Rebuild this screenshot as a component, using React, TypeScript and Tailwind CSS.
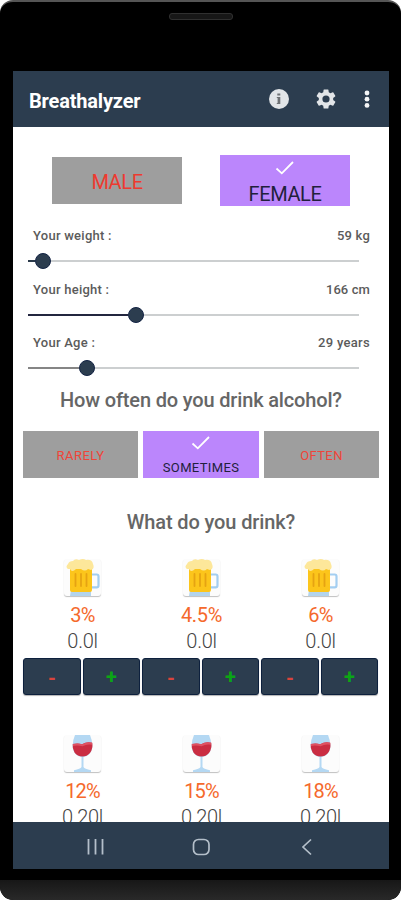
import React from "react";

const measures = [
  { label: "Your weight :", value: "59 kg", at: 15, fill: "bg-[#2b3a4b]", space: "tracking-[0.25px]", valueSpace: "tracking-[0.2px]" },
  { label: "Your height :", value: "166 cm", at: 108, fill: "bg-[#23263f]", space: "tracking-[0.25px]", valueSpace: "tracking-[0.1px]" },
  { label: "Your Age :", value: "29 years", at: 59, fill: "bg-[#858585]", space: "tracking-[0.25px]", valueSpace: "tracking-[0.3px]" },
];

const beers = ["3%", "4.5%", "6%"];
const wines = ["12%", "15%", "18%"];

function Check() {
  return (
    <svg width="20" height="16" viewBox="0 0 20 16" fill="none" stroke="white" strokeWidth="1.8">
      <path d="M1.5 8.5 6.8 13.3 18 2" />
    </svg>
  );
}

function Beer() {
  return (
    <svg width="37" height="37" viewBox="0 0 37 37">
      <path d="M28 15.5h4.7q1.800 0 1.800 1.800v9.200q0 1.800-1.800 1.800H28" fill="none" stroke="#a3cef1" strokeWidth="2.200" />
      <path d="M7 31h20v6H6z" fill="#b3d4ed" />
      <path d="M6 7h22v24q0 2-2 2H8q-2 0-2-2z" fill="#fcc51b" />
      <path d="M11.500 15v12M17 15v12M22.500 15v12" stroke="#e6a312" strokeWidth="1.800" strokeLinecap="round" />
      <path d="M4 10Q1 8 4 5 5 2 9 2q2-3 6-1 4-2 7 0 6-1 7 4 2 5-2 6l-3-1q-3 3-7 0H12Q8 14 6 10z" fill="#fde79a" />
    </svg>
  );
}

function Wine() {
  return (
    <svg width="37" height="37" viewBox="0 0 37 37">
      <path d="M11 0h15q3 7 2.200 13-1.300 7.500-8.700 9v10q1 2 7.500 3.200V37H10v-1.800q6.500-1.200 7.500-3.200v-10Q10 20.500 8.800 13 8 7 11 0z" fill="#b4d8f3" />
      <path d="M8.700 9q5-1.300 9.300 0.200 5-2.800 10.200-1.400 1 6-2.200 10.200-3.200 3.600-7.500 3.600-5 0-8-4-2.300-4-1.800-8.600z" fill="#ca2d42" />
      <path d="M9 9q5-1.300 9.300 0.200 5-2.800 9.900-1.400v2q-5-1-9.700 1.400Q13 10 9 11z" fill="#df5262" />
    </svg>
  );
}

function Drink({ kind, strength, amount }: { kind: "beer" | "wine"; strength: string; amount: string }) {
  return (
    <div className="flex w-[119px] flex-col items-center">
      <div className="h-[37px] w-[37px] rounded-[3px] bg-[#fcfcfc] shadow-[0_1px_1px_rgba(0,0,0,0.25)]">
        {kind === "beer" ? <Beer /> : <Wine />}
      </div>
      <div className={`mt-[6px] h-[26px] text-[20px] leading-[26px] text-[#f5692c] ${strength === "4.5%" ? "tracking-[-0.3px]" : "tracking-[-0.800px]"}`}>{strength}</div>
      <div className="h-[26px] text-[20px] font-light leading-[26px] tracking-[-0.300px] text-[#444]">{amount}</div>
      {kind === "beer" && (
        <div className="mt-[4px] flex w-[119px] gap-[2px]">
          <button className="flex h-[37px] w-[58px] items-center justify-center rounded-[3px] border border-[#0d203d] bg-[#2c3d4f] pt-[3px] text-[20px] font-bold leading-none text-[#d9443c] shadow-[0_1px_1px_rgba(0,0,0,0.3)]">-</button>
          <button className="flex h-[37px] w-[57px] items-center justify-center rounded-[3px] border border-[#0d203d] bg-[#2c3d4f] pt-[2px] text-[20px] font-bold leading-none text-[#0ba515] shadow-[0_1px_1px_rgba(0,0,0,0.3)]">+</button>
        </div>
      )}
    </div>
  );
}

export default function App() {
  return (
    <div className="h-[900px] w-[401px] bg-white font-[Roboto,sans-serif]">
      <div className="flex h-[900px] w-[401px] flex-col overflow-hidden rounded-[13px] border-t-2 border-[#555] bg-black">
        <div className="flex h-[69px] shrink-0 justify-center pt-[11px]">
          <div className="h-[7px] w-[64px] rounded-[3px] border border-[#303030] bg-[#171717]" />
        </div>
        <div className="mx-[13px] flex h-[798px] w-[376px] shrink-0 flex-col bg-white">
          <header className="flex h-[56px] shrink-0 items-center bg-[#2c3d4f] pl-[16px] text-white">
            <h1 className="w-[239px] pt-[3px] text-[20px] font-bold leading-[24px] tracking-[-0.18px]">Breathalyzer</h1>
            <svg width="22" height="22" viewBox="0 0 22 22">
              <circle cx="11" cy="11" r="10" fill="#e2e5e8" />
              <path d="M9.300 5.500h3v2h-3zM8.800 9h3.500v7h1H8.800v-1h.8v-5h-.8z" fill="#6f7275" />
            </svg>
            <svg className="ml-[24px]" width="24" height="24" viewBox="0 0 24 24" fill="#e2e5e8">
              <path d="M19.140 12.940c.04-.3.060-.610.060-.940s-.020-.640-.070-.940l2.030-1.580a.49.49 0 0 0 .120-.610l-1.920-3.320a.49.49 0 0 0-.590-.220l-2.390.960a7 7 0 0 0-1.620-.940l-.360-2.540a.48.48 0 0 0-.480-.410h-3.840a.47.47 0 0 0-.470.410l-.360 2.540c-.590.240-1.130.570-1.620.940l-2.390-.960a.47.47 0 0 0-.590.220L2.740 8.870a.48.48 0 0 0 .120.610l2.030 1.580c-.050.300-.090.630-.090.940s.020.640.070.940l-2.030 1.580a.49.49 0 0 0-.120.610l1.920 3.320c.120.220.370.290.590.220l2.390-.960c.500.380 1.030.700 1.620.940l.360 2.540c.050.240.240.410.480.410h3.840c.240 0 .440-.170.470-.410l.360-2.540c.590-.240 1.130-.560 1.620-.940l2.390.960c.220.080.470 0 .590-.220l1.920-3.320a.47.47 0 0 0-.120-.610zM12 15.600a3.600 3.600 0 1 1 0-7.200 3.600 3.600 0 0 1 0 7.200z" />
            </svg>
            <svg className="ml-[25px]" width="8" height="18" viewBox="0 0 8 18" fill="#f4f5f6">
              <circle cx="4" cy="3" r="2.400" /><circle cx="4" cy="9.200" r="2.400" /><circle cx="4" cy="15.400" r="2.400" />
            </svg>
          </header>

          <main className="h-[695px] overflow-hidden">
            <div className="mt-[28px] flex h-[51px] items-center gap-[38px] pl-[39px]">
              <button className="h-[47px] w-[130px] bg-[#9e9e9e] pt-[2px] text-[20px] tracking-[-0.4px] text-[#ee3a30]">MALE</button>
              <button className="flex h-[51px] w-[130px] flex-col items-center bg-[#bb86fc] pt-[5px] text-[20px] leading-[24px] tracking-[-0.4px] text-[#221f3c]">
                <Check />
                <span className="mt-[6px]">FEMALE</span>
              </button>
            </div>

            <div className="mt-[18px]">
              {measures.map((m) => (
                <div key={m.label} className="h-[53.500px]">
                  <div className="flex h-[24px] items-center justify-between pl-[20px] pr-[19px] text-[13px] font-medium text-[#5b5b5b]">
                    <span className={m.space}>{m.label}</span>
                    <span className={m.valueSpace}>{m.value}</span>
                  </div>
                  <div className="ml-[15px] flex h-[26px] w-[331px] items-center">
                    <div className={`h-[2px] ${m.fill}`} style={{ width: m.at - 8 }} />
                    <div className="h-[16px] w-[16px] rounded-full border border-[#132344] bg-[#2c3d4f]" />
                    <div className="h-[2px] flex-1 bg-[#cccfd0]" />
                  </div>
                </div>
              ))}
            </div>

            <h2 className="mt-[3px] text-center text-[20px] font-medium leading-[24px] tracking-[-0.16px] text-[#666]">How often do you drink alcohol?</h2>
            <div className="mt-[19px] flex h-[47px] gap-[5px] pl-[10px] text-[13px]">
              <button className="w-[115px] bg-[#9e9e9e] pt-[3px] tracking-[0.5px] text-[#f04438]">RARELY</button>
              <button className="flex w-[116px] flex-col items-center bg-[#bb86fc] pt-[4px] leading-[16px] tracking-[0.35px] text-[#221f3c]">
                <Check />
                <span className="mt-[9px]">SOMETIMES</span>
              </button>
              <button className="w-[115px] bg-[#9e9e9e] pt-[3px] tracking-[0.4px] text-[#f04438]">OFTEN</button>
            </div>

            <h2 className="mt-[32px] pl-[20px] text-center text-[20px] font-medium leading-[24px] tracking-[-0.12px] text-[#666]">What do you drink?</h2>
            <div className="mt-[25px] flex pl-[10px]">
              {beers.map((s) => <Drink key={s} kind="beer" strength={s} amount="0.0l" />)}
            </div>
            <div className="mt-[40px] flex pl-[10px]">
              {wines.map((s) => <Drink key={s} kind="wine" strength={s} amount="0.20l" />)}
            </div>
          </main>

          <nav className="flex h-[47px] shrink-0 items-center bg-[#2c3d4f] pl-[74px] pt-[2px]">
            <svg width="17" height="18" viewBox="0 0 17 18" fill="none" stroke="#b4bfca" strokeWidth="1.800">
              <path d="M1.500 1v15.500M8.500 1v15.500M15.500 1v15.500" />
            </svg>
            <svg className="ml-[88px]" width="19" height="18" viewBox="0 0 19 18" fill="none" stroke="#b4bfca" strokeWidth="1.700">
              <rect x="1.500" y="1.500" width="15.500" height="15" rx="5" />
            </svg>
            <svg className="ml-[90px]" width="12" height="18" viewBox="0 0 12 18" fill="none" stroke="#b4bfca" strokeWidth="1.700">
              <path d="M10 1.500 2 9l8 7.500" />
            </svg>
          </nav>
        </div>
        <div className="mt-[11px] flex-1 rounded-b-[13px] bg-gradient-to-b from-[#171717] to-[#292929]" />
      </div>
    </div>
  );
}
